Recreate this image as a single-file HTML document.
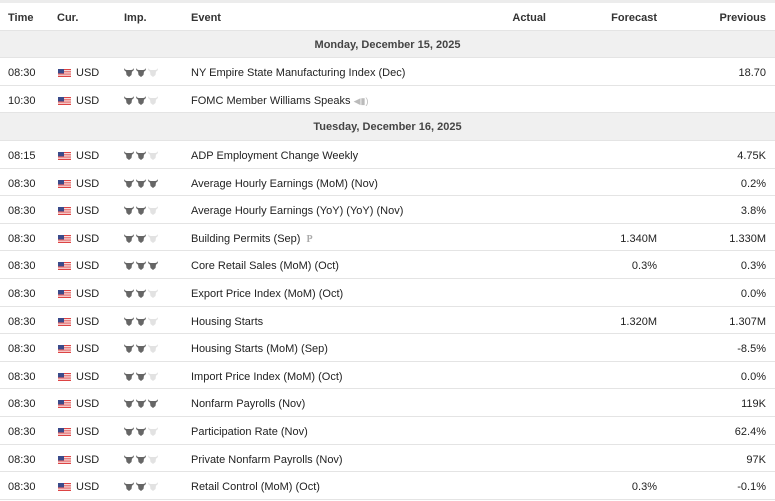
<!DOCTYPE html>
<html><head><style>
*{margin:0;padding:0;box-sizing:border-box}
body{width:775px;height:494px;overflow:hidden;background:#fff;font-family:"Liberation Sans",Arial,sans-serif;font-size:11px;color:#222}
.top{height:3px;background:#ececec}
.row{position:relative;height:27.6px;border-bottom:1px solid #e4e4e4}
.hdr{height:27.6px;font-weight:bold;color:#333}
.date{background:#f0f0f0;text-align:center;font-weight:bold;color:#444;line-height:29px;font-size:11px}
.c{position:absolute;top:1px;line-height:28px;white-space:nowrap}
.t{left:8px}.f{left:58px;top:11px;width:13px;height:8px;line-height:0}
.u{left:76px}.i{left:124px;top:10px;line-height:0}.e{left:191px}
.a{right:229px;text-align:right}.fc{right:118px}.p{right:9px}
</style></head><body>
<div class="top"></div>
<div class="row hdr"><span class="c t">Time</span><span class="c u" style="left:57px">Cur.</span><span class="c" style="left:124px">Imp.</span><span class="c e">Event</span><span class="c a">Actual</span><span class="c fc">Forecast</span><span class="c p">Previous</span></div>
<svg width="0" height="0" style="position:absolute"><defs>
<g id="b"><path d="M0 0 Q1 2 3 2 L7 2 Q9 2 10 0 Q10 3 8 3.5 L7.5 7 L5 9 L2.5 7 L2 3.5 Q0 3 0 0Z"/></g>
<g id="fl"><rect width="13" height="8" fill="#d44"/><rect y="1.2" width="13" height="1.1" fill="#fff"/><rect y="3.4" width="13" height="1.1" fill="#fff"/><rect y="5.6" width="13" height="1.1" fill="#fff"/><rect width="6" height="4.4" fill="#3a4a8a"/></g>
</defs></svg>
<div id="list"></div>
<script>
const rows=[["D","Monday, December 15, 2025"],
["08:30","NY Empire State Manufacturing Index (Dec)","","","18.70",2],
["10:30","FOMC Member Williams Speaks <span style='color:#bbb;font-size:9px'>◀▮)</span>","","","",2],
["D","Tuesday, December 16, 2025"],
["08:15","ADP Employment Change Weekly","","","4.75K",2],
["08:30","Average Hourly Earnings (MoM) (Nov)","","","0.2%",3],
["08:30","Average Hourly Earnings (YoY) (YoY) (Nov)","","","3.8%",2],
["08:30","Building Permits (Sep) &nbsp;<span style='color:#aaa;font-family:Liberation Serif;font-weight:bold;font-size:10px'>P</span>","","1.340M","1.330M",2],
["08:30","Core Retail Sales (MoM) (Oct)","","0.3%","0.3%",3],
["08:30","Export Price Index (MoM) (Oct)","","","0.0%",2],
["08:30","Housing Starts","","1.320M","1.307M",2],
["08:30","Housing Starts (MoM) (Sep)","","","-8.5%",2],
["08:30","Import Price Index (MoM) (Oct)","","","0.0%",2],
["08:30","Nonfarm Payrolls (Nov)","","","119K",3],
["08:30","Participation Rate (Nov)","","","62.4%",2],
["08:30","Private Nonfarm Payrolls (Nov)","","","97K",2],
["08:30","Retail Control (MoM) (Oct)","","0.3%","-0.1%",2]];
let h="";
for(const r of rows){
 if(r[0]=="D"){h+=`<div class="row date">${r[1]}</div>`;continue;}
 let b="";for(let k=0;k<3;k++)b+=`<use href="#b" x="${k*12}" fill="${k<r[5]?'#666':'#e2e2e2'}"/>`;
 h+=`<div class="row"><span class="c t">${r[0]}</span><svg class="c f" width="13" height="8"><use href="#fl"/></svg><span class="c u">USD</span><svg class="c i" width="36" height="9" viewBox="0 0 36 9">${b}</svg><span class="c e">${r[1]}</span><span class="c a">${r[2]}</span><span class="c fc">${r[3]}</span><span class="c p">${r[4]}</span></div>`;
}
document.getElementById("list").innerHTML=h;
</script>
</body></html>
